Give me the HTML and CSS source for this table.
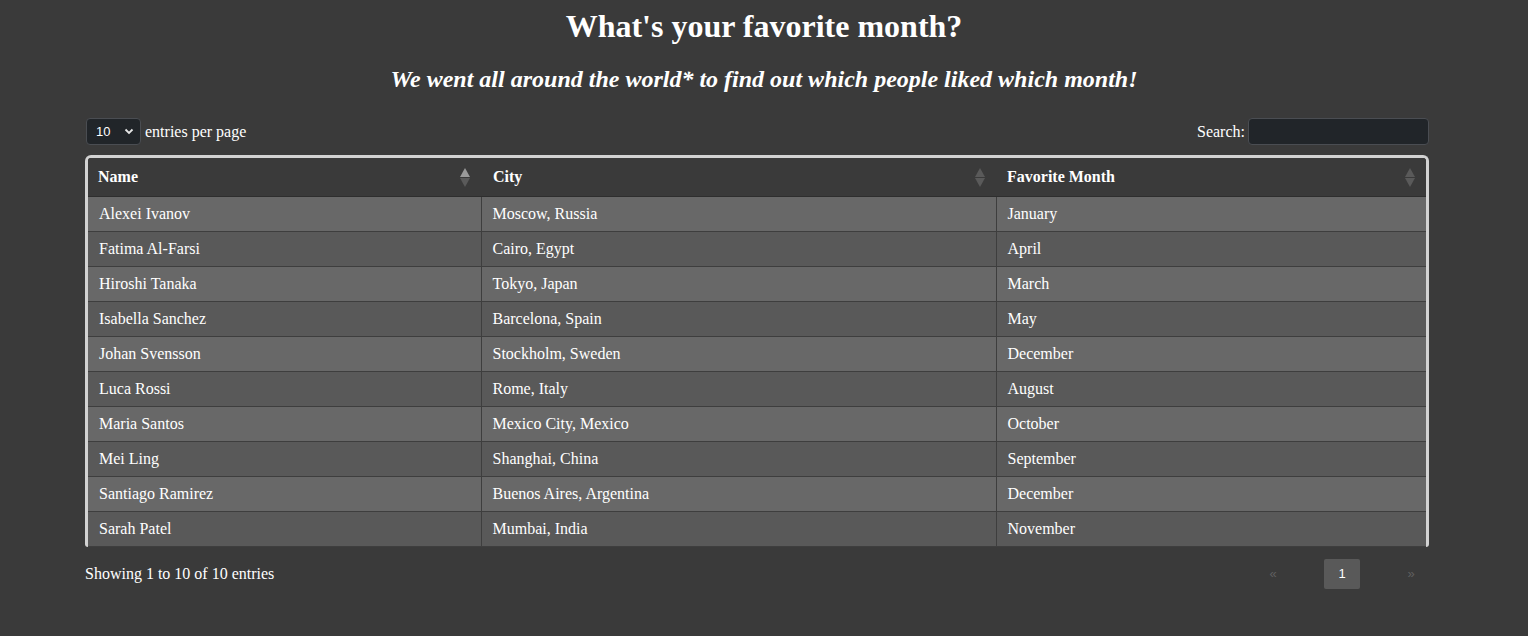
FILE: index.html
```html
<!DOCTYPE html>
<html>
<head>
<meta charset="utf-8">
<link rel="stylesheet" href="styles.css">
</head>
<body>
<h1 class="title">What's your favorite month?</h1>
<h2 class="subtitle">We went all around the world* to find out which people liked which month!</h2>
<div class="dt">
  <div class="dt-top">
    <div class="length">
      <div class="select">10<svg width="10" height="7" viewBox="0 0 10 7"><path d="M1.5 1.5 L5 5 L8.5 1.5" fill="none" stroke="#e6e6e6" stroke-width="1.8"/></svg></div>
      <span>entries per page</span>
    </div>
    <div class="search">
      <span>Search:</span>
      <div class="input"></div>
    </div>
  </div>
  <div class="wrap">
    <table>
      <thead>
        <tr>
          <th class="c1">Name<span class="sort asc"><i class="up"></i><i class="down"></i></span></th>
          <th class="c2">City<span class="sort"><i class="up"></i><i class="down"></i></span></th>
          <th class="c3">Favorite Month<span class="sort"><i class="up"></i><i class="down"></i></span></th>
        </tr>
      </thead>
      <tbody>
        <tr><td>Alexei Ivanov</td><td>Moscow, Russia</td><td>January</td></tr>
        <tr><td>Fatima Al-Farsi</td><td>Cairo, Egypt</td><td>April</td></tr>
        <tr><td>Hiroshi Tanaka</td><td>Tokyo, Japan</td><td>March</td></tr>
        <tr><td>Isabella Sanchez</td><td>Barcelona, Spain</td><td>May</td></tr>
        <tr><td>Johan Svensson</td><td>Stockholm, Sweden</td><td>December</td></tr>
        <tr><td>Luca Rossi</td><td>Rome, Italy</td><td>August</td></tr>
        <tr><td>Maria Santos</td><td>Mexico City, Mexico</td><td>October</td></tr>
        <tr><td>Mei Ling</td><td>Shanghai, China</td><td>September</td></tr>
        <tr><td>Santiago Ramirez</td><td>Buenos Aires, Argentina</td><td>December</td></tr>
        <tr><td>Sarah Patel</td><td>Mumbai, India</td><td>November</td></tr>
      </tbody>
    </table>
  </div>
  <div class="dt-bottom">
    <div class="info">Showing 1 to 10 of 10 entries</div>
    <div class="paging">
      <span class="pg off">«</span>
      <span class="pg cur">1</span>
      <span class="pg off">»</span>
    </div>
  </div>
</div>
</body>
</html>
```

FILE: styles.css
```css
html, body {
  margin: 0;
  padding: 0;
  background: #3a3a3a;
  color: #ffffff;
  font-family: "Liberation Serif", "Times New Roman", serif;
}
.title {
  margin: 0;
  padding-top: 8px;
  text-align: center;
  font-size: 32px;
  font-weight: bold;
  line-height: 37px;
}
.subtitle {
  margin: 20px 0 0;
  text-align: center;
  font-size: 24px;
  font-style: italic;
  font-weight: bold;
  line-height: 28px;
}
.dt {
  margin: 0 99px 0 85px;
}
.dt-top {
  display: flex;
  justify-content: space-between;
  align-items: center;
  margin-top: 25px;
  height: 27px;
}
.length {
  display: flex;
  align-items: center;
  gap: 4px;
  font-size: 16px;
}
.select {
  box-sizing: border-box;
  width: 55px;
  height: 27px;
  margin-left: 1px;
  background: #212529;
  border: 1px solid #4a4d52;
  border-radius: 4px;
  display: flex;
  align-items: center;
  justify-content: space-between;
  padding: 0 6px 0 9px;
  font-family: "Liberation Sans", Arial, sans-serif;
  font-size: 13px;
  color: #fff;
}
.search {
  display: flex;
  align-items: center;
  gap: 3px;
  font-size: 16px;
}
.input {
  box-sizing: border-box;
  width: 181px;
  height: 27px;
  background: #212529;
  border: 1px solid #4a4d52;
  border-radius: 4px;
}
.wrap {
  margin-top: 10px;
  border: 3px solid #d2d2d2;
  border-bottom: 0;
  border-radius: 6px 6px 3px 3px;
  overflow: hidden;
}
table {
  width: 100%;
  border-collapse: collapse;
  font-size: 16px;
}
th {
  position: relative;
  text-align: left;
  font-weight: bold;
  height: 38px;
  padding: 0 10px 0 12px;
  box-sizing: border-box;
  background: #3a3a3a;
  border-bottom: 1px solid #2e2e2e;
}
th.c1 { width: 393px; padding-left: 10px; }
th.c2 { width: 515px; }
th.c3 { padding-left: 11px; }
td {
  height: 35px;
  box-sizing: border-box;
  padding: 0 10px 0 11px;
  border-bottom: 1px solid #3e3e3e;
  border-left: 1px solid #3e3e3e;
}
td:first-child { border-left: 0; padding-left: 11px; }
tbody tr:nth-child(odd) td { background: #686868; }
tbody tr:nth-child(even) td { background: #595959; }
.sort {
  position: absolute;
  right: 11px;
  top: 10px;
  width: 10px;
  height: 20px;
}
.sort i {
  position: absolute;
  left: 0;
  width: 0;
  height: 0;
  border-left: 5px solid transparent;
  border-right: 5px solid transparent;
}
.sort .up {
  top: 0;
  border-bottom: 9px solid #5a5a5a;
}
.sort .down {
  top: 10px;
  border-top: 9px solid #5a5a5a;
}
.sort.asc .up { border-bottom-color: #9a9a9a; }
.dt-bottom {
  display: flex;
  justify-content: space-between;
  align-items: center;
  margin-top: 12px;
}
.info {
  font-size: 16px;
}
.paging {
  display: flex;
  align-items: center;
  gap: 33px;
}
.pg {
  box-sizing: border-box;
  width: 36px;
  height: 30px;
  display: flex;
  align-items: center;
  justify-content: center;
  font-family: "Liberation Sans", Arial, sans-serif;
  font-size: 13px;
  border-radius: 2px;
}
.pg.off { color: #5f5f5f; }
.pg.cur { background: #595959; color: #fff; }
```
